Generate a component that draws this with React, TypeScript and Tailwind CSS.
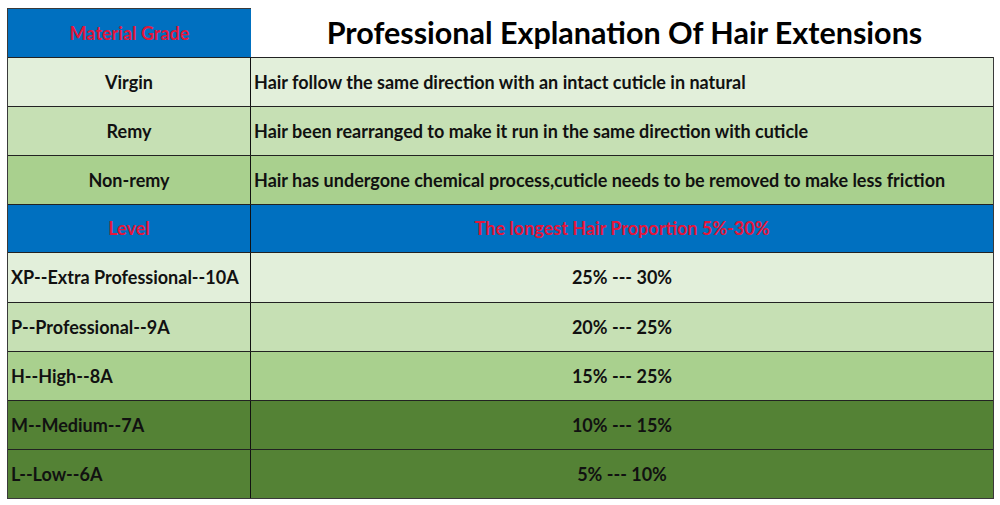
const grades = [
  { name: "Virgin", text: "Hair follow the same direction with an intact cuticle in natural", bg: "bg-[#e2efda]" },
  { name: "Remy", text: "Hair been rearranged to make it run in the same direction with cuticle", bg: "bg-[#c6e0b4]" },
  { name: "Non-remy", text: "Hair has undergone chemical process,cuticle needs to be removed to make less friction", bg: "bg-[#a9d08e]" },
];

const levels = [
  { name: "XP--Extra Professional--10A", range: "25% --- 30%", bg: "bg-[#e2efda]" },
  { name: "P--Professional--9A", range: "20% --- 25%", bg: "bg-[#c6e0b4]" },
  { name: "H--High--8A", range: "15% --- 25%", bg: "bg-[#a9d08e]" },
  { name: "M--Medium--7A", range: "10% --- 15%", bg: "bg-[#548235]" },
  { name: "L--Low--6A", range: "5% --- 10%", bg: "bg-[#548235]" },
];

export default function App() {
  return (
    <div className="w-[1000px] h-[505px] bg-white pt-[8px] pl-[7px] font-['Lato','Liberation_Sans',sans-serif] font-bold text-[#111]">
      <div className="w-[987px] border-l border-r border-b border-[#3a3a3a]">
        {/* Header */}
        <div className="flex h-[49px]">
          <div className="w-[243px] bg-[#0070c0] border-t border-[#3a3a3a] flex items-center justify-center text-[18px] text-[#e3163b]">
            Material Grade
          </div>
          <div className="flex-1 bg-white flex items-center justify-center text-[30.5px] text-black pl-[4px] -mr-px">
            Professional Explanation Of Hair Extensions
          </div>
        </div>

        {grades.map((g) => (
          <div key={g.name} className={`flex h-[49px] border-t border-[#222] ${g.bg}`}>
            <div className="w-[243px] border-r border-[#111] flex items-center justify-center text-[18px]">
              {g.name}
            </div>
            <div className="flex-1 flex items-center pl-[3px] text-[18px] whitespace-nowrap">{g.text}</div>
          </div>
        ))}

        {/* Level header */}
        <div className="flex h-[49px] border-t border-[#222] border-b bg-[#0070c0] text-[18px] text-[#e3163b]">
          <div className="w-[243px] border-r border-[#111] flex items-center justify-center">Level</div>
          <div className="flex-1 flex items-center justify-center">The longest Hair Proportion 5%-30%</div>
        </div>

        {levels.map((l, i) => (
          <div
            key={l.name}
            className={`flex h-[49px] ${i === 0 ? "" : "border-t border-[#222]"} ${l.bg}`}
          >
            <div className="w-[243px] border-r border-[#111] flex items-center pl-[3px] text-[18px] whitespace-nowrap">
              {l.name}
            </div>
            <div className="flex-1 flex items-center justify-center text-[18px]">{l.range}</div>
          </div>
        ))}
      </div>
    </div>
  );
}
